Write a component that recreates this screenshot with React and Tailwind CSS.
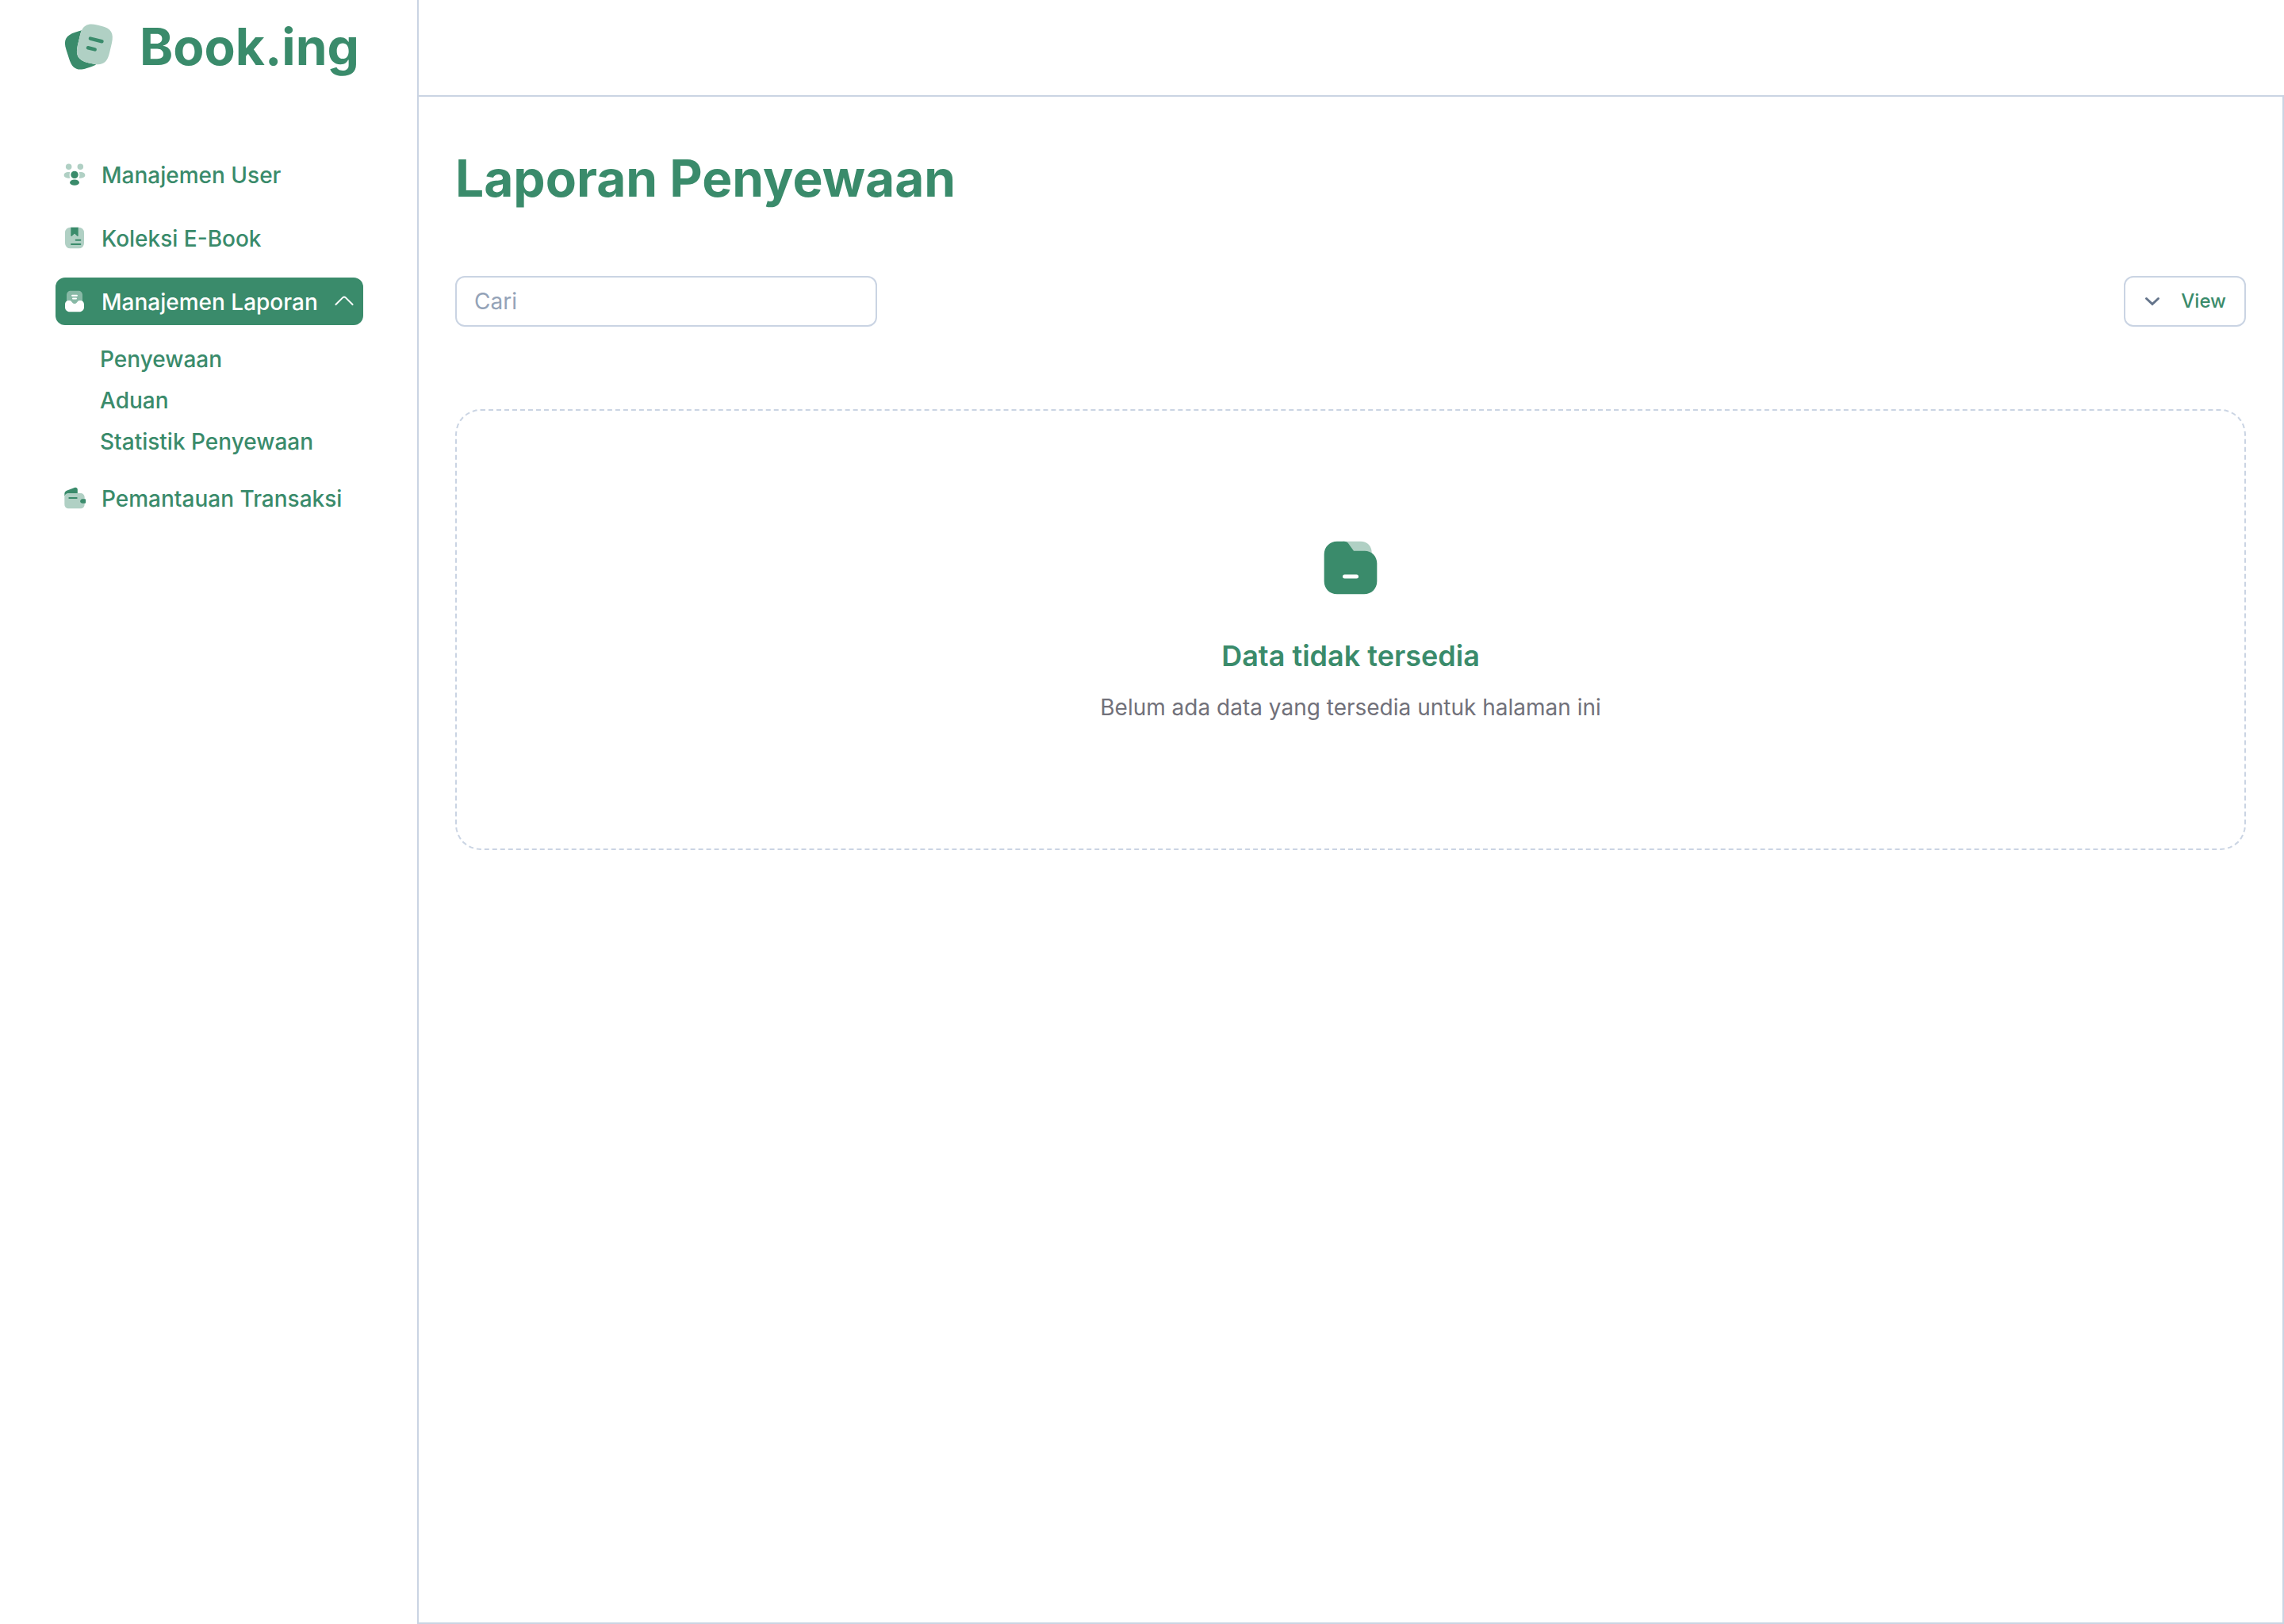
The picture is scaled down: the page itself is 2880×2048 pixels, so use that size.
import React from "react";

const green = "#3a8b6b";

function LogoIcon() {
  return (
    <svg viewBox="0 0 24 24" className="size-[72px] shrink-0" fill="none" aria-hidden="true">
      <path d="M15.06 19.39C14.44 19.81 13.66 20.16 12.71 20.47L11.13 20.99C7.16 22.27 5.07 21.2 3.78 17.23L2.5 13.28C1.22 9.31 2.28 7.21 6.25 5.93L7.83 5.41C8.24 5.28 8.63 5.17 9 5.1C8.7 5.71 8.46 6.45 8.26 7.3L7.28 11.49C6.3 15.67 7.59 17.73 11.76 18.72L13.44 19.12C14.02 19.26 14.56 19.35 15.06 19.39Z" fill={green} />
      <path d="M17.17 3.21L15.5 2.82C12.16 2.03 10.17 2.68 9 5.1C8.7 5.71 8.46 6.45 8.26 7.3L7.28 11.49C6.3 15.67 7.59 17.73 11.76 18.72L13.44 19.12C14.02 19.26 14.56 19.35 15.06 19.39C18.18 19.69 19.84 18.23 20.68 14.62L21.66 10.44C22.64 6.26 21.36 4.19 17.17 3.21Z" fill="#b0d0c4" />
      <path d="M12.64 8.53L17.49 9.76M11.66 12.4L14.56 13.14" stroke={green} strokeWidth="1.5" strokeLinecap="round" />
    </svg>
  );
}

function UsersIcon() {
  return (
    <svg viewBox="0 0 24 24" className="size-8 shrink-0" fill="none" aria-hidden="true">
      <g fill="#b0d0c4">
        <circle cx="6.5" cy="4.7" r="2.8" />
        <circle cx="17.5" cy="4.7" r="2.8" />
        <path d="M7.2 12.3c0-.9.2-1.7.6-2.4C5 9.3 2 10.2 2 12.6c0 2.3 2.8 3.3 5.6 2.7.1-.1.1-.2 0-.3-.3-.8-.4-1.7-.4-2.7Z" />
        <path d="M16.8 12.3c0-.9-.2-1.7-.6-2.4 2.8-.6 5.8.3 5.8 2.7 0 2.3-2.8 3.3-5.6 2.7-.1-.1-.1-.2 0-.3.3-.8.4-1.7.4-2.7Z" />
      </g>
      <circle cx="12" cy="12.3" r="3.5" fill={green} />
      <ellipse cx="12" cy="19.6" rx="4.4" ry="2.7" fill={green} />
    </svg>
  );
}

function BookIcon() {
  return (
    <svg viewBox="0 0 24 24" className="size-8 shrink-0" fill="none" aria-hidden="true">
      <rect x="3" y="2" width="18" height="20" rx="5" fill="#b0d0c4" />
      <path d="M15.5 2v7.9c0 .5-.5.7-.9.4L12.35 8.2a.5.5 0 0 0-.7 0L9.4 10.3c-.4.3-.9.1-.9-.4V2h7Z" fill={green} />
      <path d="M13.25 14H17.5M9 18h8.5" stroke={green} strokeWidth="1.5" strokeLinecap="round" />
    </svg>
  );
}

function ReportIcon() {
  return (
    <svg viewBox="0 0 24 24" className="size-8 shrink-0" fill="none" aria-hidden="true">
      <path d="M8.7 2h6.6c2.7 0 4.2 1.5 4.2 4.2V17h-15V6.2C4.5 3.5 6 2 8.7 2Z" fill="#fff" fillOpacity="0.4" />
      <path d="M9.8 6.6h4.4M10.5 9.4h3" stroke="#fff" strokeWidth="1.5" strokeLinecap="round" />
      <path d="M21 15.3v2.2c0 2.7-1.8 4.5-4.5 4.5h-9C4.8 22 3 20.2 3 17.5v-2.2c0-2.7 1.5-4 3.8-4 1.2 0 1.7.3 2.4 1.1l.8.9c1.1 1.2 2.9 1.2 4 0l.8-.9c.7-.8 1.2-1.1 2.4-1.1 2.3 0 3.8 1.3 3.8 4Z" fill="#fff" />
    </svg>
  );
}

function WalletIcon() {
  return (
    <svg viewBox="0 0 24 24" className="size-8 shrink-0" fill="none" aria-hidden="true">
      <path d="M14.85 3.95V8H6.6C4 8 2.5 9 2.5 11.5V8c0-1.3.8-2.4 2-2.9l7.9-3c1.2-.4 2.45.5 2.45 1.85Z" fill={green} />
      <path d="M21.5 12.5v5.3c0 2.7-1.6 4.2-4.2 4.2H6.7c-2.6 0-4.2-1.5-4.2-4.2v-6.1c0-2.7 1.6-4.2 4.2-4.2h10.6c2.6 0 4.2 1.5 4.2 4.2v.8Z" fill="#b0d0c4" />
      <path d="M7 12h7" stroke={green} strokeWidth="1.5" strokeLinecap="round" />
      <path d="M22.6 14v2.1c0 .6-.4 1-1 1h-2c-1.2 0-2.2-.8-2.3-1.9 0-.6.2-1.2.6-1.6.4-.4.9-.6 1.5-.6h2.2c.6 0 1 .4 1 1Z" fill={green} />
    </svg>
  );
}

function FolderIcon() {
  return (
    <svg viewBox="0 0 24 24" className="size-20" fill="none" aria-hidden="true">
      <path d="M9 2h6.8C18.3 2 20 3.8 20 6.2V8H9V2Z" fill="#b0d0c4" />
      <path d="M22 10.3v6.8c0 2.8-2.1 4.9-4.9 4.9H6.9C4.1 22 2 19.9 2 17.1V6.9C2 4.1 4.1 2 6.9 2h2.6c.8 0 1.4.3 1.8 1L13.2 5.6H17.3c2.7 0 4.7 2 4.7 4.7Z" fill={green} />
      <path d="M9.75 15.3h4.5" stroke="#fff" strokeWidth="1.5" strokeLinecap="round" />
    </svg>
  );
}

function NavLink({ icon, children }) {
  return (
    <a href="#" className="flex h-[60px] items-center gap-4 rounded-xl px-2">
      {icon}
      <span className="pt-px pl-0.5">{children}</span>
    </a>
  );
}

export default function App() {
  return (
    <div className="flex min-h-screen bg-white font-['Inter',sans-serif] text-[#3a8b6b]">
      <aside className="flex w-[526px] shrink-0 flex-col px-[70px]">
        <a href="#" className="mt-[15px] flex items-center gap-7 pl-[6px]">
          <LogoIcon />
          <span className="text-[64px] leading-[88px] font-bold">Book.ing</span>
        </a>
        <nav className="mt-[87px] flex flex-col text-[28px] leading-10 font-medium">
          <div className="flex flex-col gap-5">
            <NavLink icon={<UsersIcon />}>Manajemen User</NavLink>
            <NavLink icon={<BookIcon />}>Koleksi E-Book</NavLink>
            <button type="button" aria-expanded="true" className="flex h-[60px] w-[388px] items-center gap-4 rounded-xl bg-[#3a8b6b] px-2 text-left text-white">
              <ReportIcon />
              <span className="flex-1 pt-px pl-0.5 whitespace-nowrap">Manajemen Laporan</span>
              <svg viewBox="0 0 24 24" className="size-8 shrink-0" fill="none" aria-hidden="true">
                <path d="M19.92 15.05L13.4 8.53c-.77-.77-2.03-.77-2.8 0L4.08 15.05" stroke="#fff" strokeWidth="1.5" strokeLinecap="round" strokeLinejoin="round" />
              </svg>
            </button>
          </div>
          <div className="mt-[23px] mb-[21px] flex flex-col gap-3 pl-14">
            <a href="#">Penyewaan</a>
            <a href="#">Aduan</a>
            <a href="#">Statistik Penyewaan</a>
          </div>
          <NavLink icon={<WalletIcon />}>Pemantauan Transaksi</NavLink>
        </nav>
      </aside>
      <div className="flex flex-1 flex-col border-l-2 border-[#cad4e3]">
        <header className="h-[120px]" />
        <main className="flex-1 border-t-2 border-r-2 border-b-2 border-[#cad4e3] px-[46px] pt-[63px]">
          <h1 className="text-[64px] leading-[80px] font-bold">Laporan Penyewaan</h1>
          <div className="mt-[83px] flex items-center justify-between">
            <input
              type="text"
              aria-label="Cari"
              placeholder="Cari"
              className="h-16 w-[532px] rounded-xl border-2 border-[#cad4e3] px-[22px] text-[28px] leading-10 placeholder:text-[#94a3b8]"
            />
            <button type="button" className="flex h-16 items-center gap-5 rounded-xl border-2 border-[#cad4e3] pr-[23px] pl-[18px] text-[24px] leading-8 font-medium">
              <svg viewBox="0 0 32 32" className="size-8" fill="none" aria-hidden="true">
                <path d="M8.5 12.5L16 19.5L23.5 12.5" stroke="#64748b" strokeWidth="3" strokeLinecap="round" />
              </svg>
              View
            </button>
          </div>
          <section className="mt-[104px] flex flex-col items-center rounded-[32px] border-2 border-dashed border-[#cad4e3] pt-[158px] pb-[158px]">
            <FolderIcon />
            <h2 className="mt-[47px] text-[36px] leading-[48px] font-semibold">Data tidak tersedia</h2>
            <p className="mt-[21px] text-[28px] leading-10 text-[#71717a]">Belum ada data yang tersedia untuk halaman ini</p>
          </section>
        </main>
      </div>
    </div>
  );
}
